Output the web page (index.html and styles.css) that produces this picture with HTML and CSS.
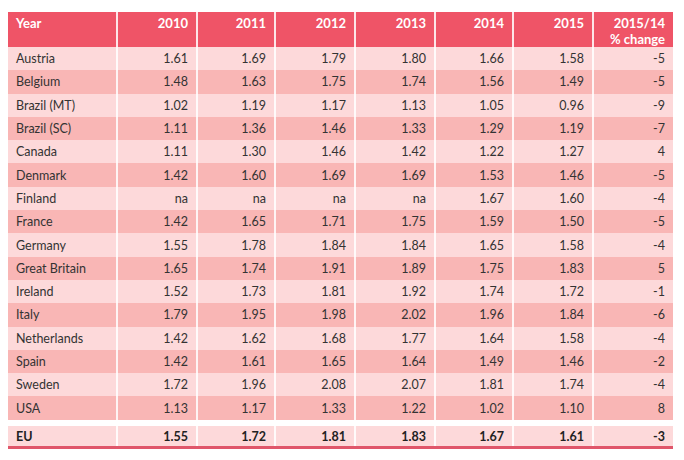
FILE: index.html
```html
<!DOCTYPE html>
<html>
<head>
<meta charset="utf-8">
<link rel="stylesheet" href="styles.css">
</head>
<body>
<table class="data">
<colgroup>
<col class="c-name"><col class="c-a"><col class="c-b"><col class="c-a"><col class="c-a"><col class="c-b"><col class="c-a"><col class="c-a">
</colgroup>
<thead>
<tr><th class="name">Year</th><th>2010</th><th>2011</th><th>2012</th><th>2013</th><th>2014</th><th>2015</th><th><span class="hl">2015/14</span><span class="hl">% change</span></th></tr>
</thead>
<tbody>
<tr class="lt"><td class="name">Austria</td><td>1.61</td><td>1.69</td><td>1.79</td><td>1.80</td><td>1.66</td><td>1.58</td><td>-5</td></tr>
<tr class="dk"><td class="name">Belgium</td><td>1.48</td><td>1.63</td><td>1.75</td><td>1.74</td><td>1.56</td><td>1.49</td><td>-5</td></tr>
<tr class="lt"><td class="name">Brazil (MT)</td><td>1.02</td><td>1.19</td><td>1.17</td><td>1.13</td><td>1.05</td><td>0.96</td><td>-9</td></tr>
<tr class="dk"><td class="name">Brazil (SC)</td><td>1.11</td><td>1.36</td><td>1.46</td><td>1.33</td><td>1.29</td><td>1.19</td><td>-7</td></tr>
<tr class="lt"><td class="name">Canada</td><td>1.11</td><td>1.30</td><td>1.46</td><td>1.42</td><td>1.22</td><td>1.27</td><td>4</td></tr>
<tr class="dk"><td class="name">Denmark</td><td>1.42</td><td>1.60</td><td>1.69</td><td>1.69</td><td>1.53</td><td>1.46</td><td>-5</td></tr>
<tr class="lt"><td class="name">Finland</td><td>na</td><td>na</td><td>na</td><td>na</td><td>1.67</td><td>1.60</td><td>-4</td></tr>
<tr class="dk"><td class="name">France</td><td>1.42</td><td>1.65</td><td>1.71</td><td>1.75</td><td>1.59</td><td>1.50</td><td>-5</td></tr>
<tr class="lt"><td class="name">Germany</td><td>1.55</td><td>1.78</td><td>1.84</td><td>1.84</td><td>1.65</td><td>1.58</td><td>-4</td></tr>
<tr class="dk"><td class="name">Great Britain</td><td>1.65</td><td>1.74</td><td>1.91</td><td>1.89</td><td>1.75</td><td>1.83</td><td>5</td></tr>
<tr class="lt"><td class="name">Ireland</td><td>1.52</td><td>1.73</td><td>1.81</td><td>1.92</td><td>1.74</td><td>1.72</td><td>-1</td></tr>
<tr class="dk"><td class="name">Italy</td><td>1.79</td><td>1.95</td><td>1.98</td><td>2.02</td><td>1.96</td><td>1.84</td><td>-6</td></tr>
<tr class="lt"><td class="name">Netherlands</td><td>1.42</td><td>1.62</td><td>1.68</td><td>1.77</td><td>1.64</td><td>1.58</td><td>-4</td></tr>
<tr class="dk"><td class="name">Spain</td><td>1.42</td><td>1.61</td><td>1.65</td><td>1.64</td><td>1.49</td><td>1.46</td><td>-2</td></tr>
<tr class="lt"><td class="name">Sweden</td><td>1.72</td><td>1.96</td><td>2.08</td><td>2.07</td><td>1.81</td><td>1.74</td><td>-4</td></tr>
<tr class="dk"><td class="name">USA</td><td>1.13</td><td>1.17</td><td>1.33</td><td>1.22</td><td>1.02</td><td>1.10</td><td>8</td></tr>
<tr class="gap"><td colspan="8"></td></tr>
<tr class="lt total"><td class="name">EU</td><td>1.55</td><td>1.72</td><td>1.81</td><td>1.83</td><td>1.67</td><td>1.61</td><td>-3</td></tr>
</tbody>
</table>
</body>
</html>
```
FILE: styles.css
```css
html, body {
  background: #ffffff;
}
body {
  margin: 12px 8px 8px 8px;
  font-family: Lato, "Open Sans", "Liberation Sans", sans-serif;
  font-size: 12.5px;
  color: #333333;
}
.data {
  border-collapse: collapse;
  table-layout: fixed;
  width: 665px;
}
.c-name { width: 109px; }
.c-a { width: 80px; }
.c-b { width: 78px; }
.data th,
.data td {
  padding: 0 8px;
  text-align: right;
  white-space: nowrap;
  border-left: 2px solid rgba(255, 255, 255, 0.85);
}
.data th:first-child,
.data td:first-child {
  border-left: none;
}
.data .name {
  text-align: left;
}
.data thead th {
  background: #ef5467;
  color: #ffffff;
  font-weight: 700;
  font-size: 13px;
  height: 35px;
  vertical-align: top;
  padding-top: 3px;
  padding-bottom: 0;
  line-height: 16px;
  box-sizing: border-box;
}
.hl {
  display: block;
  line-height: 16px;
  height: 16px;
}
.data tbody tr {
  height: 23.3px;
}
.data tbody td {
  vertical-align: middle;
  line-height: 14px;
  padding-top: 1px;
}
.lt td { background: #fdd9da; }
.dk td { background: #f9b6b5; }
.data tr.gap { height: 6px; }
.data tr.gap td {
  background: #ffffff;
  border-left: none;
  padding: 0;
  height: 6px;
}
.data tr.total {
  height: 22px;
}
.data tr.total td {
  font-weight: 700;
  color: #222222;
  border-bottom: 3px solid #e0566a;
}
```
